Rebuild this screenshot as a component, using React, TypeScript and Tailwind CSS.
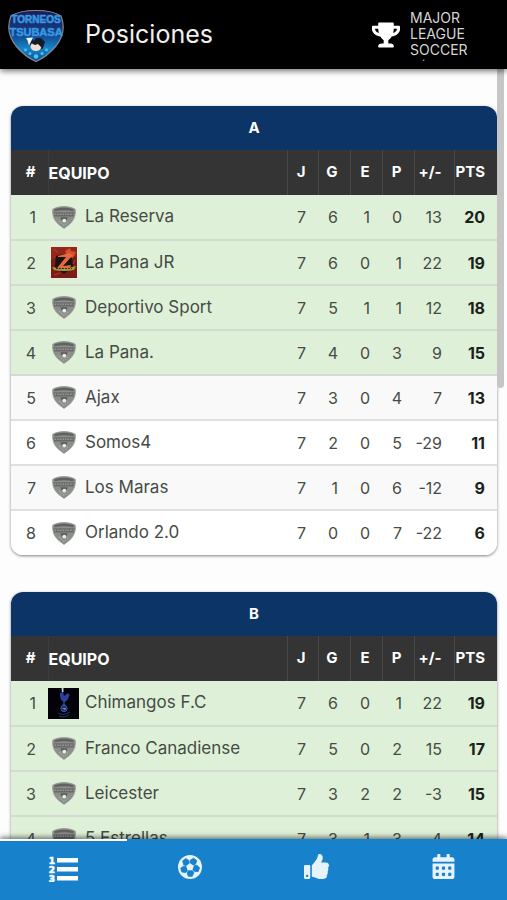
import React, { useState } from "react";
import { FaCalendarAlt, FaThumbsUp, FaTrophy } from "react-icons/fa";
import clsx from "clsx";

type Team = {
  name: string;
  crest?: "pana" | "rooster";
  stats: number[];
  points: number;
};

const groups: { name: string; teams: Team[] }[] = [
  {
    name: "A",
    teams: [
      { name: "La Reserva", stats: [7, 6, 1, 0, 13], points: 20 },
      { name: "La Pana JR", crest: "pana", stats: [7, 6, 0, 1, 22], points: 19 },
      { name: "Deportivo Sport", stats: [7, 5, 1, 1, 12], points: 18 },
      { name: "La Pana.", stats: [7, 4, 0, 3, 9], points: 15 },
      { name: "Ajax", stats: [7, 3, 0, 4, 7], points: 13 },
      { name: "Somos4", stats: [7, 2, 0, 5, -29], points: 11 },
      { name: "Los Maras", stats: [7, 1, 0, 6, -12], points: 9 },
      { name: "Orlando 2.0", stats: [7, 0, 0, 7, -22], points: 6 },
    ],
  },
  {
    name: "B",
    teams: [
      { name: "Chimangos F.C", crest: "rooster", stats: [7, 6, 0, 1, 22], points: 19 },
      { name: "Franco Canadiense", stats: [7, 5, 0, 2, 15], points: 17 },
      { name: "Leicester", stats: [7, 3, 2, 2, -3], points: 15 },
      { name: "5 Estrellas", stats: [7, 3, 1, 3, 4], points: 14 },
    ],
  },
];

const headers = ["J", "G", "E", "P", "+/-", "PTS"];

const ListIcon = ({ className }: { className?: string }) => (
  <svg viewBox="0 0 30 30" className={className} fill="currentColor" aria-hidden="true">
    <path d="M9 6h21v4.500H9zM9 15h21v4.500H9zM9 24h21v4.500H9z" />
    <g
      fontFamily="DejaVu Sans, sans-serif"
      fontWeight="700"
      fontSize="9"
      stroke="currentColor"
      strokeWidth="0.600"
      textAnchor="middle"
    >
      <text x="4" y="11.500">1</text>
      <text x="4" y="20.500">2</text>
      <text x="4" y="29.500">3</text>
    </g>
  </svg>
);

const BallIcon = ({ className }: { className?: string }) => (
  <svg viewBox="0 0 24 24" className={className} aria-hidden="true">
    <circle cx="12" cy="12" r="12" fill="currentColor" />
    <g fill="#1781cb" stroke="#1781cb" strokeLinejoin="round">
      {[0, 72, 144, 216, 288].map((angle) => (
        <path
          key={angle}
          d="M12.200 8.200V5.200L15.600 3.200L18.800 5.600L17.600 9L15.200 10.200Z"
          strokeWidth="0.800"
          transform={`rotate(${angle} 12 12)`}
        />
      ))}
    </g>
    <path d="M12 8.200l3.700 2.700-1.400 4.300H9.700l-1.400-4.300z" fill="currentColor" />
  </svg>
);

const tabs = [
  { label: "Posiciones", Icon: ListIcon, size: "size-[30px]" },
  { label: "Partidos", Icon: BallIcon, size: "size-6" },
  { label: "Fair play", Icon: FaThumbsUp, size: "size-[25px]" },
  { label: "Calendario", Icon: FaCalendarAlt, size: "size-[25px]" },
];

const Logo = () => (
  <svg viewBox="0 0 58 54" className="h-[54px] w-[58px] shrink-0" role="img" aria-label="Torneos Tsubasa">
    <defs>
      <linearGradient id="logo-bg" x1="0" y1="0" x2="0" y2="1">
        <stop offset="0" stopColor="#1d1c58" />
        <stop offset="0.45" stopColor="#123f86" />
        <stop offset="0.75" stopColor="#1687c8" />
        <stop offset="1" stopColor="#0b4b91" />
      </linearGradient>
    </defs>
    <path
      d="M29 2.500C41 2.500 49 4.500 54 8C58 18 56 29 49 38C44 44 37 50 29 53.500C21 50 14 44 9 38C2 29 0 18 4 8C9 4.500 17 2.500 29 2.500Z"
      fill="url(#logo-bg)"
      stroke="#8b8797"
      strokeWidth="1.200"
    />
    <g
      fill="#3fa4ea"
      stroke="#2f8bd8"
      strokeWidth="0.700"
      fontFamily="Liberation Sans, sans-serif"
      fontWeight="700"
      textAnchor="middle"
    >
      <text x="29" y="15" fontSize="10">TORNEOS</text>
      <text x="29" y="28" fontSize="11">TSUBASA</text>
    </g>
    <path d="M20 31h5l2 2 2-3h5l4 4-2 6-5 3-6-2-2-5z" fill="#141b2a" />
    <path d="M19 30l7-.5-2 4-2 4-1.500-5z" fill="#eef4f8" />
    <ellipse cx="29" cy="38.500" rx="5.500" ry="4.500" fill="#f2dfd2" />
    <path d="M24 35l7-3 4 3 1 6-5-5-3 1z" fill="#141b2a" />
    <g fill="#49c4f5">
      <circle cx="18.500" cy="42" r="1.400" />
      <circle cx="23" cy="45.500" r="1.500" />
      <circle cx="29" cy="48.500" r="2.300" />
      <circle cx="35" cy="45.500" r="1.500" />
      <circle cx="39.500" cy="42" r="1.400" />
    </g>
  </svg>
);

const DefaultCrest = () => (
  <svg viewBox="0 0 24 23" className="h-[23px] w-6" aria-hidden="true">
    <path
      d="M12 .6C16.500.6 20 1.400 23.200 3.200 23.800 8.500 22.500 13 19 16.800 17 19 14.500 20.500 12 22.400 9.500 20.500 7 19 5 16.800 1.500 13 .2 8.500.8 3.200 4 1.400 7.500.6 12 .6Z"
      fill="#8b8e8b"
      stroke="#8f938f"
      strokeWidth="0.800"
    />
    <path d="M2.500 3.300Q12 .4 21.500 3.300V5.300Q12 3.200 2.500 5.300Z" fill="#5f625f" />
    <path d="M1.600 6.200h20.800l-.6 4.200H2.200Z" fill="#686b68" />
    <path d="M2.500 8.300h19" stroke="#959995" strokeWidth="1.600" strokeDasharray="1.600 1" />
    <path d="M8.500 11.200h7l-1 3.300h-5Z" fill="#5a5d5a" />
    <circle cx="12.300" cy="14.600" r="1.900" fill="#e9ece9" />
    <path d="M7 15l5 4.500 5-4.500" fill="none" stroke="#a9ada9" strokeWidth="1.200" strokeDasharray="1.500 1.200" />
  </svg>
);

const PanaCrest = () => (
  <svg viewBox="0 0 26 31" className="h-[31px] w-[26px]" aria-hidden="true">
    <path d="M0 0h26v31H0z" fill="#7c1c16" />
    <path d="M0 0h26v10L13 7 0 13z" fill="#97261a" />
    <path d="M14 4l5-3 1 3 5 1-3 6-5-1z" fill="#d4512a" />
    <path d="M5 9l8-2 8 4 1 9-9 7-9-7z" fill="#171411" />
    <path d="M7 9l11-3 4 2-10 11 8-1-1 3H6l9-11H7z" fill="#e9673d" />
    <path d="M1 20q12 3 24-1l-2 4q-10 2-20 0z" fill="#a49a3c" />
    <path d="M5 21.500h16" stroke="#343112" strokeWidth="1" strokeDasharray="2 1" />
    <path d="M2 2l5 3M3 28l6-2M24 13l-2 4" stroke="#bc3b25" strokeWidth="1" />
  </svg>
);

const RoosterCrest = () => (
  <svg viewBox="0 0 31 31" className="size-[31px]" aria-hidden="true">
    <path d="M0 0h31v31H0z" fill="#020208" />
    <path d="M13.500 0h2v4l-1.500 1z" fill="#c9c7dc" />
    <path d="M12 5l3-1 1 4 4-3 1.500 2-2 5-3 2-3.500-2-1-4z" fill="#2b409c" />
    <path d="M16 12v5M14.500 17h3" stroke="#4055a6" strokeWidth="1.200" />
    <circle cx="16" cy="20.500" r="3.200" fill="#1b2b76" stroke="#4c61b0" strokeWidth="0.800" />
    <path d="M14 20h4l-1 2z" fill="#7e8fd0" />
    <path d="M10 25q6 3 12-1M11 28q5 2 10-1" fill="none" stroke="#222d5c" strokeWidth="1.200" />
  </svg>
);

const Crest = ({ type }: { type?: Team["crest"] }) => {
  if (type === "pana") return <PanaCrest />;
  if (type === "rooster") return <RoosterCrest />;
  return <DefaultCrest />;
};

const GroupTable = ({ name, teams }: { name: string; teams: Team[] }) => (
  <section className="overflow-hidden rounded-xl bg-white shadow-[0_1px_3px_rgba(0,0,0,0.5)]">
    <table className="w-full table-fixed border-collapse text-right text-base text-[#454b45]">
      <caption className="h-11 bg-[#0c3467] text-center text-[15px] leading-[44px] font-bold text-white">
        {name}
      </caption>
      <colgroup>
        <col className="w-[37px]" />
        <col />
        <col className="w-[31px]" />
        <col className="w-8" />
        <col className="w-8" />
        <col className="w-8" />
        <col className="w-10" />
        <col className="w-[43px]" />
      </colgroup>
      <thead className="bg-[#343434] text-[15px] text-white">
        <tr className="h-[45px]">
          <th className="pr-3">#</th>
          <th className="border-l border-[#3d3d3d] text-left text-base">EQUIPO</th>
          {headers.map((header) => (
            <th key={header} className="border-l border-[#484848] pr-3">
              <span className="flex justify-end">{header}</span>
            </th>
          ))}
        </tr>
      </thead>
      <tbody>
        {teams.map((team, index) => (
          <tr
            key={team.name}
            className={clsx(
              "h-[45px] border-b-2 last:border-b-0",
              index < 4 ? "border-[#d3dbd1] bg-[#dff0d8]" : "border-[#e0e0e0]",
              index >= 4 && (index % 2 === 0 ? "bg-[#f9f9f9]" : "bg-white")
            )}
          >
            <td className="pr-3">{index + 1}</td>
            <td className="text-left">
              <div className="flex items-center gap-1.5">
                <span className="flex w-[31px] shrink-0 justify-center">
                  <Crest type={team.crest} />
                </span>
                <span className="truncate text-[17px]">{team.name}</span>
              </div>
            </td>
            {team.stats.map((value, i) => (
              <td key={headers[i]} className="pr-3">
                <span className="flex justify-end">{value}</span>
              </td>
            ))}
            <td className="pr-3 font-bold text-[#1b211b]">{team.points}</td>
          </tr>
        ))}
      </tbody>
    </table>
  </section>
);

const App = () => {
  const [activeTab, setActiveTab] = useState(0);

  return (
    <div className="flex h-screen flex-col overflow-hidden bg-[#fdfdfd] font-['Inter','Open_Sans',sans-serif]">
      <header className="z-10 flex h-[69px] shrink-0 items-center bg-black pr-10 pl-[7px] text-white shadow-[0_2px_6px_rgba(0,0,0,0.55)]">
        <Logo />
        <h1 className="ml-5 flex-1 text-[25px] text-[#f0f0f0]">Posiciones</h1>
        <button type="button" className="flex items-center gap-2.5 text-left">
          <FaTrophy className="h-[26px] w-7" />
          <span className="block w-[57px] pt-2 text-sm leading-4 text-[#d5d5d5]">
            MAJOR LEAGUE SOCCER
            <span className="block pl-3 text-[10px] leading-[10px]">´</span>
          </span>
        </button>
      </header>

      <div className="relative min-h-0 flex-1">
        <main className="flex h-full flex-col gap-[37px] overflow-y-auto pt-[37px] pr-2.5 pl-[11px] [scrollbar-width:none]">
          {groups.map((group) => (
            <div key={group.name} className="shrink-0">
              <GroupTable name={group.name} teams={group.teams} />
            </div>
          ))}
        </main>
        <div className="absolute top-0 right-[3px] h-[319px] w-[7px] rounded-b bg-[#c6c6c6]" aria-hidden="true" />
      </div>

      <nav className="z-10 grid h-[61px] shrink-0 grid-cols-4 bg-[#1781cb] shadow-[0_-2px_5px_rgba(0,0,0,0.5)]">
        {tabs.map(({ label, Icon, size }, index) => (
          <button
            key={label}
            type="button"
            aria-label={label}
            onClick={() => setActiveTab(index)}
            className={clsx(
              "flex items-center justify-center border-t-2 pb-2",
              index === activeTab ? "border-white text-white" : "border-transparent text-[#e6f3fc]"
            )}
          >
            <Icon className={size} />
          </button>
        ))}
      </nav>
    </div>
  );
};

export default App;
